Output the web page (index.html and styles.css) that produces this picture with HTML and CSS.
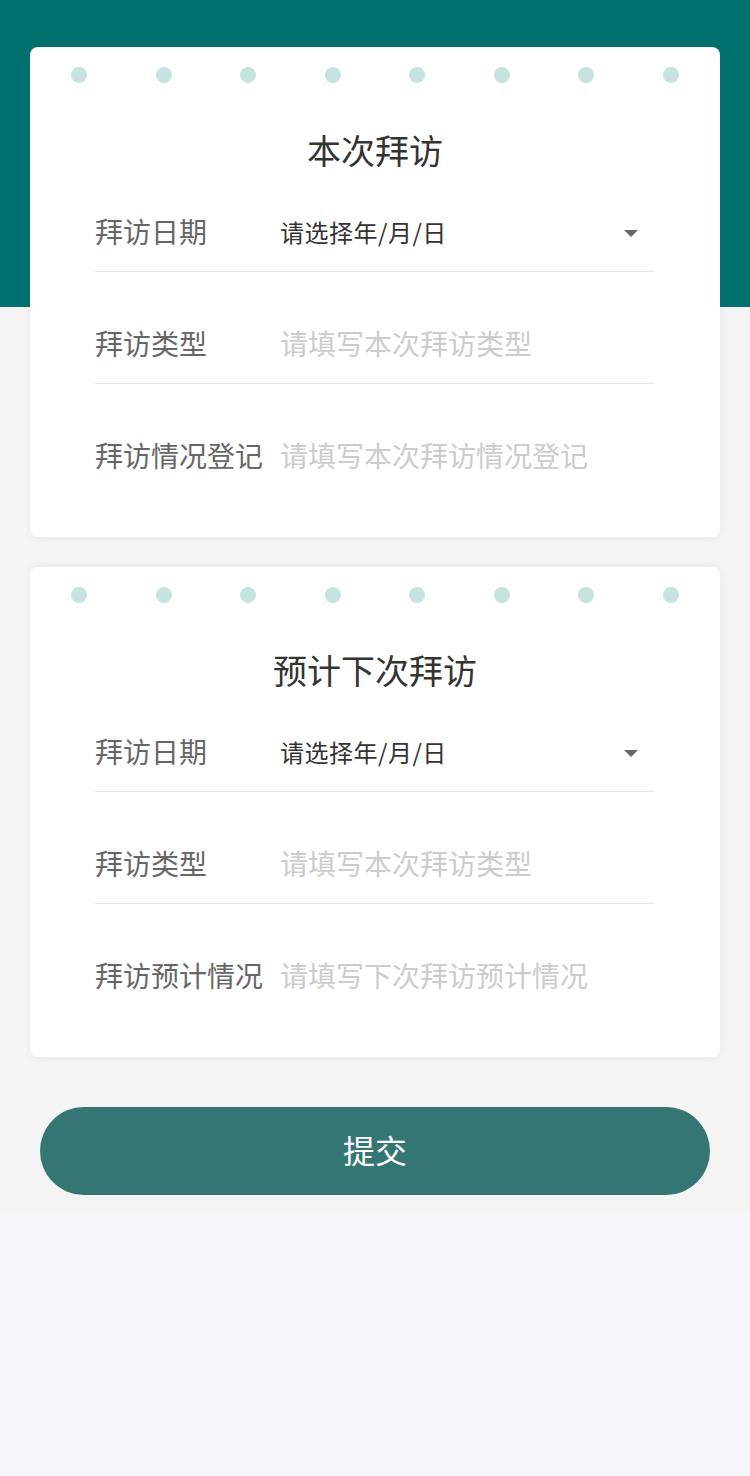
FILE: index.html
```html
<!DOCTYPE html>
<html lang="zh">
<head>
<meta charset="utf-8">
<title>拜访登记</title>
<link rel="stylesheet" href="styles.css">
</head>
<body>
<div class="page">
  <section class="card">
    <div class="dots"><span></span><span></span><span></span><span></span><span></span><span></span><span></span><span></span></div>
    <h2 class="title">本次拜访</h2>
    <div class="form">
      <div class="row">
        <div class="label">拜访日期</div>
        <div class="value date">请选择年/月/日</div>
        <span class="caret"></span>
      </div>
      <div class="row">
        <div class="label">拜访类型</div>
        <div class="value placeholder">请填写本次拜访类型</div>
      </div>
      <div class="row last">
        <div class="label">拜访情况登记</div>
        <div class="value placeholder">请填写本次拜访情况登记</div>
      </div>
    </div>
  </section>
  <section class="card">
    <div class="dots"><span></span><span></span><span></span><span></span><span></span><span></span><span></span><span></span></div>
    <h2 class="title">预计下次拜访</h2>
    <div class="form">
      <div class="row">
        <div class="label">拜访日期</div>
        <div class="value date">请选择年/月/日</div>
        <span class="caret"></span>
      </div>
      <div class="row">
        <div class="label">拜访类型</div>
        <div class="value placeholder">请填写本次拜访类型</div>
      </div>
      <div class="row last">
        <div class="label">拜访预计情况</div>
        <div class="value placeholder">请填写下次拜访预计情况</div>
      </div>
    </div>
  </section>
  <button class="submit">提交</button>
</div>
</body>
</html>
```
FILE: styles.css
```css
html, body {
  margin: 0;
  padding: 0;
  background: #f6f6fa;
  font-family: "Noto Sans CJK SC", "Noto Sans", sans-serif;
}
.page {
  background: linear-gradient(#00716f 0, #00716f 307px, #f4f4f4 307px);
  padding: 47px 0 17px;
  display: flex;
  flex-direction: column;
}
.card {
  margin: 0 30px;
  background: #fff;
  border-radius: 8px;
  box-shadow: 0 0 12px rgba(0, 0, 0, 0.05);
  padding: 20px 0 42px;
}
.card + .card {
  margin-top: 30px;
}
.dots {
  display: flex;
  justify-content: space-between;
  padding: 0 41px;
  height: 16px;
}
.dots span {
  width: 16px;
  height: 16px;
  border-radius: 50%;
  background: #c4e3e1;
}
.title {
  margin: 45px 0 0;
  height: 48px;
  line-height: 44px;
  text-align: center;
  font-size: 34px;
  font-weight: 400;
  color: #333;
}
.form {
  margin: 19px 65px 0;
}
.row {
  box-sizing: border-box;
  height: 77px;
  display: flex;
  align-items: center;
  border-bottom: 1px solid #e6e6e6;
}
.row + .row {
  margin-top: 35px;
}
.row.last {
  border-bottom: none;
  height: 76px;
}
.label {
  width: 187px;
  flex: none;
  font-size: 28px;
  color: #666;
  white-space: nowrap;
  margin-bottom: 4px;
}
.value {
  flex: 1;
  font-size: 28px;
  white-space: nowrap;
  margin-bottom: 4px;
  margin-left: -2px;
}
.value.date {
  font-size: 24px;
  color: #333;
  letter-spacing: 0.5px;
}
.placeholder {
  color: #ccc;
}
.caret {
  width: 0;
  height: 0;
  border-left: 7px solid transparent;
  border-right: 7px solid transparent;
  border-top: 7px solid #666;
  margin-right: 17px;
}
.submit {
  margin: 50px 40px 0;
  height: 88px;
  border: none;
  border-radius: 44px;
  background: #337673;
  color: #fff;
  font-family: "Noto Sans CJK SC", "Noto Sans", sans-serif;
  font-size: 32px;
  padding: 0 0 4px;
}
```
